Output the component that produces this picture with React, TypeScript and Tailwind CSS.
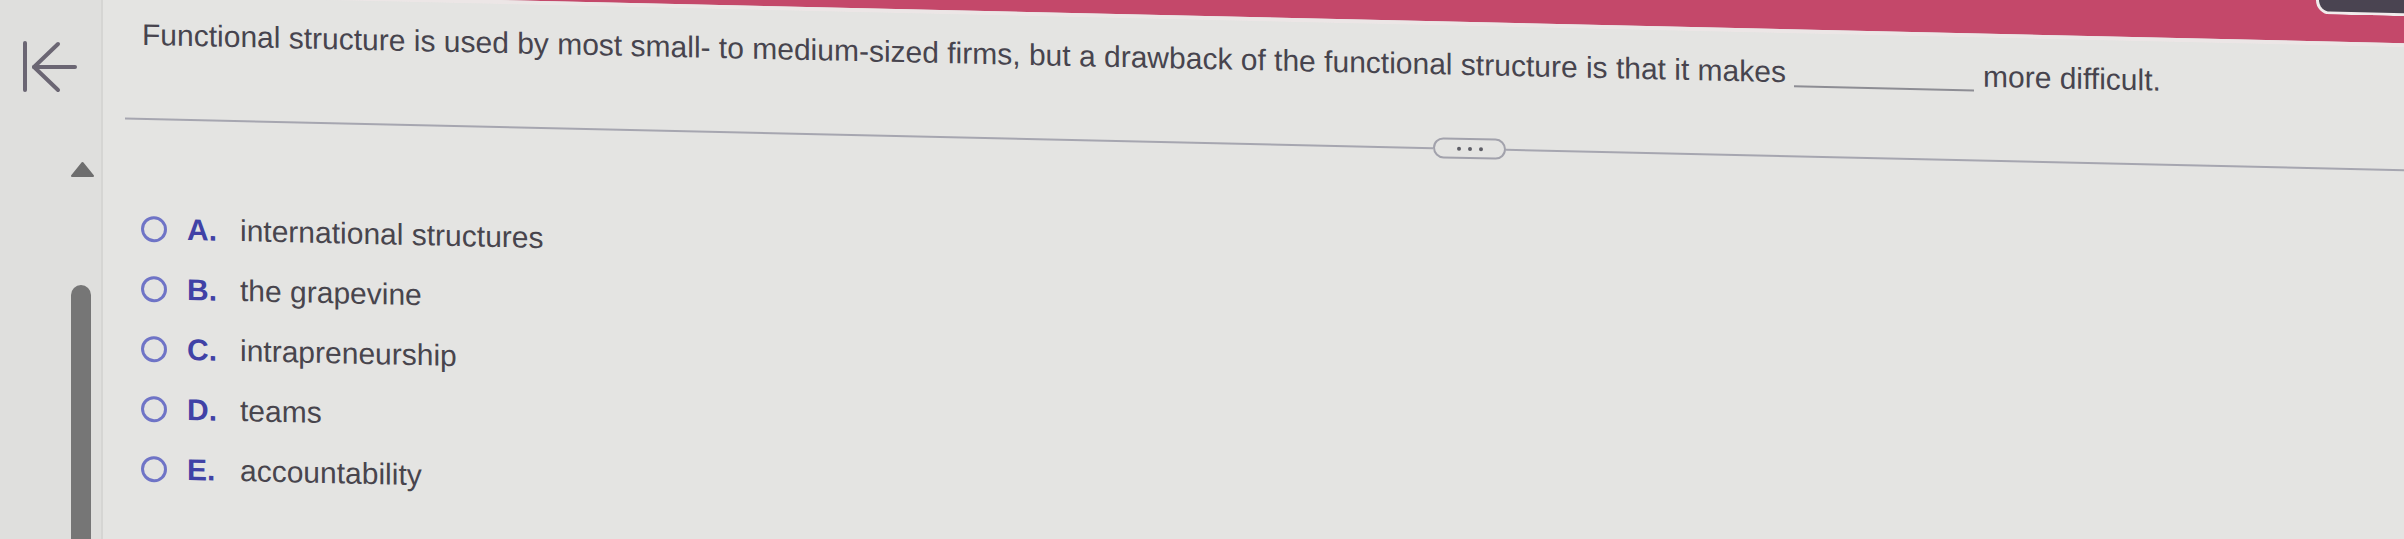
const options = [
  { letter: 'A.', text: 'international structures' },
  { letter: 'B.', text: 'the grapevine' },
  { letter: 'C.', text: 'intrapreneurship' },
  { letter: 'D.', text: 'teams' },
  { letter: 'E.', text: 'accountability' },
];

export default function App() {
  return (
    <div className="flex h-[539px] w-[2404px] overflow-hidden bg-[#e4e4e2] font-['Liberation_Sans',Arial,sans-serif]">
      {/* left rail */}
      <aside className="flex w-[103px] shrink-0 flex-col border-r-2 border-[#d5d5d3] bg-[#dfdfdd] pt-[40px]">
        <svg
          className="ml-[20px]"
          width="60"
          height="54"
          viewBox="20 40 60 54"
          fill="none"
          stroke="#6b6673"
          strokeWidth="4"
          strokeLinecap="round"
          strokeLinejoin="round"
        >
          <path d="M25 43v47" />
          <path d="M58 44 34 67l24 23" />
          <path d="M34 67h41" />
        </svg>
        <svg className="ml-[70px] mt-[66px]" width="26" height="18" viewBox="70 160 26 18">
          <path d="M82.5 163 93 176H72z" fill="#6e6e6e" stroke="#6e6e6e" strokeWidth="2" strokeLinejoin="round" />
        </svg>
        <div className="ml-[71px] mt-[107px] w-[20px] flex-1 rounded-t-[10px] bg-[#767676]" />
      </aside>

      {/* question panel */}
      <main className="min-w-0 flex-1">
        <div className="-mt-[60px] w-[2310px] origin-top-left skew-y-[1.3deg]">
          <div className="flex h-[51px] bg-[#c4486a]">
            <div className="ml-[2213px] h-[24px] w-[120px] shrink-0 rounded-bl-[14px] border-b-[3px] border-l-[3px] border-[#f1ecec] bg-[#4a4451]" />
          </div>
          <div className="h-[4px] bg-[#ece6e6]" />

          <div className="h-[620px] bg-[#e4e4e2]">
            <p className="h-[112px] whitespace-nowrap pl-[39px] pt-[24px] text-[30px] leading-none text-[#47444e]">
              Functional structure is used by most small- to medium-sized firms, but a drawback of the functional
              structure is that it makes
              <span className="ml-[8px] mr-[9px] inline-block h-0 w-[180px] border-b-2 border-[#8d8d94] align-[-5px]" />
              more difficult.
            </p>

            <div className="flex h-[21px] items-center pl-[22px]">
              <div className="h-[2px] w-[1308px] bg-[#a6a6b0]" />
              <div className="flex h-[21px] w-[73px] shrink-0 items-center justify-center gap-[7px] rounded-full border-2 border-[#a2a2ac]">
                <span className="size-[4px] rounded-full bg-[#5e5e66]" />
                <span className="size-[4px] rounded-full bg-[#5e5e66]" />
                <span className="size-[4px] rounded-full bg-[#5e5e66]" />
              </div>
              <div className="h-[2px] flex-1 bg-[#a6a6b0]" />
            </div>

            <ul className="mt-[70px]">
              {options.map((o) => (
                <li key={o.letter} className="flex h-[60px] items-center pl-[38px] text-[30px] leading-none">
                  <span className="size-[26px] shrink-0 rounded-full border-[3px] border-[#6f74c6]" />
                  <span className="ml-[20px] w-[53px] font-bold text-[#4042a6]">{o.letter}</span>
                  <span className="text-[#48454d]">{o.text}</span>
                </li>
              ))}
            </ul>
          </div>
        </div>
      </main>
    </div>
  );
}
